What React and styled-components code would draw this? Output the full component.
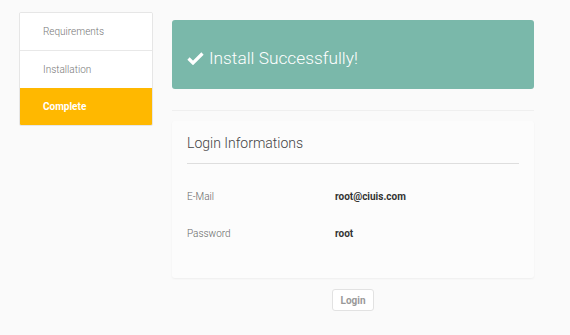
import React from "react";
import styled, { createGlobalStyle } from "styled-components";

const Global = createGlobalStyle`
  html, body { margin: 0; padding: 0; background: #fafafa; }
  body { font-family: Roboto, "Noto Sans", sans-serif; color: #333; }
`;

const Page = styled.div`
  display: flex;
  align-items: flex-start;
  gap: 19px;
  padding: 12px 36px 0 19px;
  width: 570px;
  box-sizing: border-box;
`;

const Sidebar = styled.nav`
  width: 134px;
  flex: none;
  background: #fff;
  border: 1px solid #e6e6e6;
  border-radius: 2px;
  overflow: hidden;
  box-sizing: border-box;
`;

const Step = styled.div`
  height: 37px;
  display: flex;
  align-items: center;
  padding-left: 23px;
  font-size: 10px;
  font-weight: ${(p) => (p.$active ? 700 : 300)};
  color: ${(p) => (p.$active ? "#fff" : "#777")};
  background: ${(p) => (p.$active ? "#ffb800" : "#fff")};
  border-top: ${(p) => (p.$first ? "none" : p.$active ? "none" : "1px solid #e8e8e8")};
`;

const Main = styled.main`
  flex: 1;
  display: flex;
  flex-direction: column;
  padding-top: 8px;
`;

const Success = styled.div`
  height: 69px;
  background: #7ab8aa;
  border-radius: 3px;
  display: flex;
  align-items: center;
  padding: 6px 15px 0;
  box-sizing: border-box;
  gap: 5px;
  color: #fff;
  font-size: 17.3px;
  font-weight: 300;
`;

const Divider = styled.div`
  height: 1px;
  background: #efefef;
  margin-top: 21px;
`;

const Card = styled.section`
  margin-top: 10px;
  background: #fcfcfc;
  border-radius: 3px;
  box-shadow: 0 1px 2px rgba(0, 0, 0, 0.05);
  padding: 14px 15px 38px;
`;

const CardTitle = styled.h3`
  margin: 0;
  font-size: 14px;
  font-weight: 300;
  color: #444;
  padding-bottom: 12px;
  border-bottom: 1px solid #dedede;
`;

const InfoRow = styled.div`
  display: grid;
  grid-template-columns: 148px 1fr;
  font-size: 10px;
  margin-top: ${(p) => p.$mt}px;
  line-height: 12px;
`;

const Label = styled.span`
  color: #666;
  font-weight: 300;
`;

const Value = styled.span`
  color: #333;
  font-weight: 700;
`;

const Footer = styled.div`
  display: flex;
  justify-content: center;
  margin-top: 11px;
`;

const Button = styled.button`
  width: 42px;
  height: 22px;
  border: 1px solid #e2e2e2;
  border-radius: 3px;
  background: #fff;
  color: #999;
  font-family: Roboto, sans-serif;
  font-size: 10px;
  font-weight: 700;
  padding: 0;
`;

const Check = () => (
  <svg width="17" height="14" viewBox="0 0 17 14">
    <path d="M1.5 7.5 L6 12 L15.5 2.5" fill="none" stroke="#fff" strokeWidth="3.2" strokeLinecap="butt" strokeLinejoin="miter" />
  </svg>
);

export default function App() {
  return (
    <>
      <Global />
      <Page>
        <Sidebar>
          <Step $first>Requirements</Step>
          <Step>Installation</Step>
          <Step $active>Complete</Step>
        </Sidebar>
        <Main>
          <Success>
            <Check />
            <span>Install Successfully!</span>
          </Success>
          <Divider />
          <Card>
            <CardTitle>Login Informations</CardTitle>
            <InfoRow $mt={27}>
              <Label>E-Mail</Label>
              <Value>root@ciuis.com</Value>
            </InfoRow>
            <InfoRow $mt={25}>
              <Label>Password</Label>
              <Value>root</Value>
            </InfoRow>
          </Card>
          <Footer>
            <Button>Login</Button>
          </Footer>
        </Main>
      </Page>
    </>
  );
}
